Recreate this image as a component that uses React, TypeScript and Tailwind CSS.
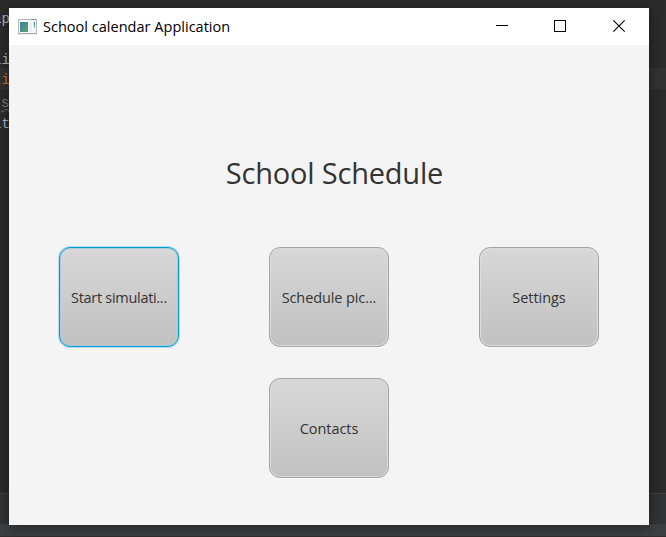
import React from 'react';

function Editor() {
  return (
    <div
      aria-hidden="true"
      className="absolute inset-0 flex flex-col overflow-hidden bg-[#2b2b2b] font-['Liberation_Mono',monospace] text-[14px] leading-[22px] text-[#a9b7c6]"
    >
      <div className="h-[8px] shrink-0" />
      <div className="-ml-[7px] h-[22px] shrink-0">ap</div>
      <div className="h-[19px] shrink-0" />
      <div className="-ml-[7px] h-[19px] shrink-0">li</div>
      <div className="h-[21px] shrink-0 bg-[#323232] text-[#cc7832]">
        <div className="-ml-[7px] pt-px">ti</div>
      </div>
      <div className="h-[24px] shrink-0 pt-[3px] pl-px text-[#808080] underline decoration-wavy decoration-1">s</div>
      <div className="-ml-[7px] h-[22px] shrink-0">it</div>
      <div className="flex-1" />
      <div className="h-[31px] shrink-0 border-t border-[#45413f] bg-[#313335]" />
      <div className="h-[12px] shrink-0 bg-[#3c3f41]" />
      <div className="h-px shrink-0 bg-[#302d2f]" />
    </div>
  );
}

function AppIcon() {
  return (
    <svg width="19" height="16" viewBox="0 0 19 16" shapeRendering="crispEdges">
      <defs>
        <linearGradient id="pane" x1="0" y1="0" x2="1" y2="1">
          <stop offset="0" stopColor="#3f7f9f" />
          <stop offset="1" stopColor="#52a778" />
        </linearGradient>
      </defs>
      <rect x="0.5" y="0.5" width="18" height="14" fill="#f7f8f9" stroke="#b3b8be" />
      <rect x="0" y="0" width="19" height="1" fill="#b0b7bd" />
      <rect x="13" y="0" width="5" height="1" fill="#7f8d96" />
      <rect x="0" y="14" width="19" height="1" fill="#a2a9b1" />
      <rect x="2" y="3" width="8" height="10" fill="url(#pane)" />
      <rect x="11" y="3" width="3" height="10" fill="#f0f0f0" />
      <rect x="16" y="3" width="1" height="3" fill="#4594a0" />
      <rect x="16" y="6" width="1" height="3" fill="#70b894" />
      <rect x="15" y="3" width="1" height="4" fill="#d5e8ea" />
      <rect x="0" y="15" width="19" height="1" fill="#eeeeee" />
    </svg>
  );
}

function TitleBar() {
  return (
    <header className="flex h-[37px] shrink-0 items-center bg-white pl-[9px] text-black">
      <AppIcon />
      <span className="ml-[6px] flex-1 text-[14.5px] tracking-[0.02px] whitespace-nowrap">
        School calendar Application
      </span>
      <svg width="160" height="37" viewBox="0 0 160 37" fill="none" stroke="#000000">
        <path d="M7 17.5H19" shapeRendering="crispEdges" />
        <rect x="65.5" y="12.5" width="11" height="11" shapeRendering="crispEdges" />
        <path d="M124.3 12.3L135.7 23.7M135.7 12.3L124.3 23.7" strokeWidth="1.1" />
      </svg>
    </header>
  );
}

function TileButton({
  label,
  focused = false,
  tracking = 'tracking-[-0.05px]',
}: {
  label: string;
  focused?: boolean;
  tracking?: string;
}) {
  return (
    <button
      className={
        'flex h-[100px] w-[120px] items-center justify-center rounded-[11px] border bg-linear-to-b from-[#d8d8d8] to-[#c1c1c1] pt-[2px] text-[14.5px] whitespace-nowrap text-[#333333] ' +
        tracking +
        (focused
          ? ' border-[#039ed3] shadow-[0_0_0_1px_#b5deed,inset_0_0_0_1px_#a9cbd5]'
          : ' border-[#a3a3a3] shadow-[0_1px_0_#f9f9f9,inset_0_0_0_1px_#dcdcdc]')
      }
    >
      {label}
    </button>
  );
}

export default function App() {
  return (
    <div className="relative h-[537px] w-[666px] overflow-hidden pt-[8px] pl-[9px] font-['Open_Sans','Noto_Sans',sans-serif]">
      <Editor />
      <div className="relative flex h-[517px] w-[640px] flex-col bg-[#f4f4f4] shadow-[0_2px_12px_rgba(0,0,0,0.45)]">
        <TitleBar />
        <main className="flex flex-col px-[50px] pt-[104px]">
          <h1 className="flex h-[48px] items-center justify-center pl-[11px] text-[29px] tracking-[-0.2px] whitespace-nowrap text-[#333333]">
            School Schedule
          </h1>
          <div className="mt-[50px] grid grid-cols-3 justify-between gap-x-[90px] gap-y-[31px]">
            <TileButton label="Start simulati..." focused tracking="tracking-[-0.3px]" />
            <TileButton label="Schedule pic..." tracking="tracking-[-0.1px]" />
            <TileButton label="Settings" />
            <div className="col-start-2">
              <TileButton label="Contacts" />
            </div>
          </div>
        </main>
      </div>
    </div>
  );
}
